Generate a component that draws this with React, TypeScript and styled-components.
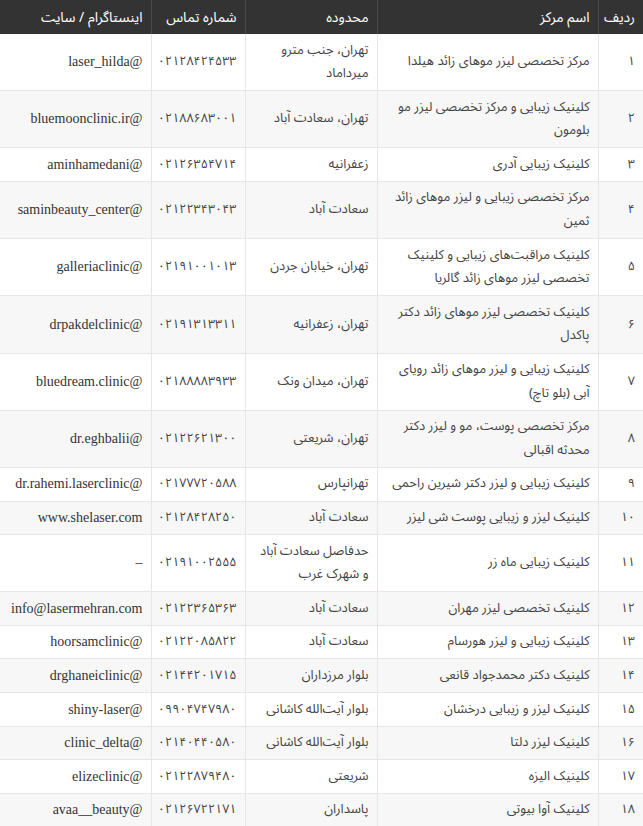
import React from "react";
import styled, { createGlobalStyle } from "styled-components";

const Global = createGlobalStyle`
  html, body { margin: 0; padding: 0; background: #fff; }
  body { font-family: "DejaVu Sans", "Noto Sans", sans-serif; }
`;

type Row = { n: string; name: string[]; area: string[]; phone: string; insta: string };

const rows: Row[] = [
  { n: "۱", name: ["مرکز تخصصی لیزر موهای زائد هیلدا"], area: ["تهران، جنب مترو", "میرداماد"], phone: "۰۲۱۲۸۴۲۴۵۳۳", insta: "@laser_hilda" },
  { n: "۲", name: ["کلینیک زیبایی و مرکز تخصصی لیزر مو", "بلومون"], area: ["تهران، سعادت آباد"], phone: "۰۲۱۸۸۶۸۳۰۰۱", insta: "@bluemoonclinic.ir" },
  { n: "۳", name: ["کلینیک زیبایی آدری"], area: ["زعفرانیه"], phone: "۰۲۱۲۶۳۵۴۷۱۴", insta: "@aminhamedani" },
  { n: "۴", name: ["مرکز تخصصی زیبایی و لیزر موهای زائد", "ثمین"], area: ["سعادت آباد"], phone: "۰۲۱۲۲۳۴۳۰۴۳", insta: "@saminbeauty_center" },
  { n: "۵", name: ["کلینیک مراقبت‌های زیبایی و کلینیک", "تخصصی لیزر موهای زائد گالریا"], area: ["تهران، خیابان جردن"], phone: "۰۲۱۹۱۰۰۱۰۱۳", insta: "@galleriaclinic" },
  { n: "۶", name: ["کلینیک تخصصی لیزر موهای زائد دکتر", "پاکدل"], area: ["تهران، زعفرانیه"], phone: "۰۲۱۹۱۳۱۳۳۱۱", insta: "@drpakdelclinic" },
  { n: "۷", name: ["کلینیک زیبایی و لیزر موهای زائد رویای", "آبی (بلو تاچ)"], area: ["تهران، میدان ونک"], phone: "۰۲۱۸۸۸۸۳۹۳۳", insta: "@bluedream.clinic" },
  { n: "۸", name: ["مرکز تخصصی پوست، مو و لیزر دکتر", "محدثه اقبالی"], area: ["تهران، شریعتی"], phone: "۰۲۱۲۲۶۲۱۳۰۰", insta: "@dr.eghbalii" },
  { n: "۹", name: ["کلینیک زیبایی و لیزر دکتر شیرین راحمی"], area: ["تهرانپارس"], phone: "۰۲۱۷۷۷۲۰۵۸۸", insta: "@dr.rahemi.laserclinic" },
  { n: "۱۰", name: ["کلینیک لیزر و زیبایی پوست شی لیزر"], area: ["سعادت آباد"], phone: "۰۲۱۲۸۴۲۸۲۵۰", insta: "www.shelaser.com" },
  { n: "۱۱", name: ["کلینیک زیبایی ماه زر"], area: ["حدفاصل سعادت آباد", "و شهرک غرب"], phone: "۰۲۱۹۱۰۰۲۵۵۵", insta: "–" },
  { n: "۱۲", name: ["کلینیک تخصصی لیزر مهران"], area: ["سعادت آباد"], phone: "۰۲۱۲۲۳۶۵۳۶۳", insta: "info@lasermehran.com" },
  { n: "۱۳", name: ["کلینیک زیبایی و لیزر هورسام"], area: ["سعادت آباد"], phone: "۰۲۱۲۲۰۸۵۸۲۲", insta: "@hoorsamclinic" },
  { n: "۱۴", name: ["کلینیک دکتر محمدجواد قانعی"], area: ["بلوار مرزداران"], phone: "۰۲۱۴۴۲۰۱۷۱۵", insta: "@drghaneiclinic" },
  { n: "۱۵", name: ["کلینیک لیزر و زیبایی درخشان"], area: ["بلوار آیت‌الله کاشانی"], phone: "۰۹۹۰۴۷۴۷۹۸۰", insta: "@shiny-laser" },
  { n: "۱۶", name: ["کلینیک لیزر دلتا"], area: ["بلوار آیت‌الله کاشانی"], phone: "۰۲۱۴۰۴۴۰۵۸۰", insta: "@clinic_delta" },
  { n: "۱۷", name: ["کلینیک الیزه"], area: ["شریعتی"], phone: "۰۲۱۲۲۸۷۹۴۸۰", insta: "@elizeclinic" },
  { n: "۱۸", name: ["کلینیک آوا بیوتی"], area: ["پاسداران"], phone: "۰۲۱۲۶۷۲۲۱۷۱", insta: "@avaa__beauty" },
];

const persian = '"Noto Sans Arabic", "Noto Naskh Arabic", "DejaVu Sans", sans-serif';

const Table = styled.table`
  width: 643px;
  border-collapse: collapse;
  direction: rtl;
  table-layout: fixed;
  color: #444;
  font-family: ${persian};
  font-size: 13px;
`;

const HeadCell = styled.th<{ $w: number }>`
  width: ${(p) => p.$w}px;
  background: #333;
  color: #fff;
  font-weight: normal;
  font-size: 14px;
  text-align: right;
  height: 34px;
  padding: 0 8px;
  box-sizing: border-box;
  border-left: 1px solid #4a4a4a;
  &:last-child { border-left: none; }
`;

const BodyRow = styled.tr<{ $shade: boolean }>`
  background: ${(p) => (p.$shade ? "#f7f7f7" : "#fff")};
  border-bottom: 1px solid #e6e6e6;
`;

type Kind = "text" | "num" | "latin";

const Cell = styled.td<{ $kind?: Kind }>`
  padding: 4.5px 8px;
  line-height: 23.6px;
  text-align: right;
  vertical-align: middle;
  white-space: nowrap;
  border-left: 1px solid #e6e6e6;
  font-family: ${(p) => (p.$kind === "latin" ? '"Liberation Serif", serif' : persian)};
  font-size: ${(p) => (p.$kind === "latin" ? "14px" : p.$kind === "num" ? "12.5px" : "13px")};
  color: ${(p) => (p.$kind === "latin" ? "#333" : "#444")};
  &:last-child { border-left: none; }
`;

const Line = styled.span`
  display: block;
`;

const Lines = ({ lines }: { lines: string[] }) => (
  <>
    {lines.map((l, i) => (
      <Line key={i}>{l}</Line>
    ))}
  </>
);

export default function App() {
  return (
    <>
      <Global />
      <Table>
        <thead>
          <tr>
            <HeadCell $w={45}>ردیف</HeadCell>
            <HeadCell $w={221}>اسم مرکز</HeadCell>
            <HeadCell $w={132}>محدوده</HeadCell>
            <HeadCell $w={94}>شماره تماس</HeadCell>
            <HeadCell $w={151}>اینستاگرام / سایت</HeadCell>
          </tr>
        </thead>
        <tbody>
          {rows.map((r, i) => (
            <BodyRow key={r.n} $shade={i % 2 === 1}>
              <Cell $kind="num">{r.n}</Cell>
              <Cell $kind="text"><Lines lines={r.name} /></Cell>
              <Cell $kind="text"><Lines lines={r.area} /></Cell>
              <Cell $kind="num">{r.phone}</Cell>
              <Cell $kind="latin">{r.insta}</Cell>
            </BodyRow>
          ))}
        </tbody>
      </Table>
    </>
  );
}
